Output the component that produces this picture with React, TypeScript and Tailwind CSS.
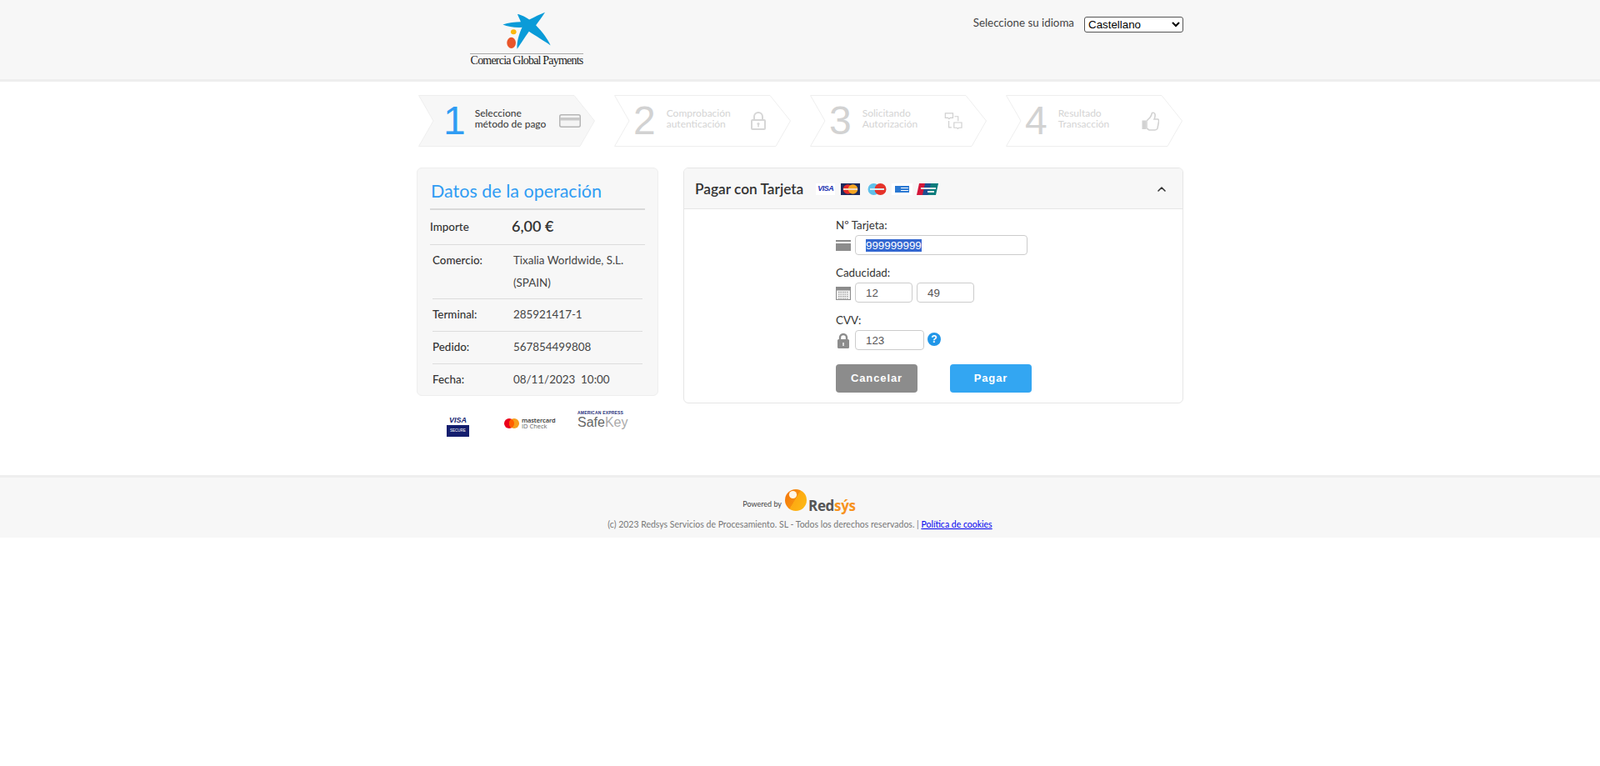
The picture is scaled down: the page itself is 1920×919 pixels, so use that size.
import { useEffect, useRef } from 'react'
import { ChevronUp } from 'lucide-react'

function CaixaLogo() {
  return (
    <div className="ml-[64px] w-[136px] pt-[13px]">
      <svg viewBox="120 10 190 145" className="ml-[36px] block h-[48px] w-[63px]">
        <path
          d="M130 60C150 52 175 50 195 50C192 40 186 30 183 22C198 24 215 34 226 42C245 32 265 22 283 15C272 32 260 48 250 62C272 85 292 110 303 135C280 120 248 100 225 85C210 105 195 130 182 148C180 120 190 92 200 70C175 72 150 68 130 60Z"
          fill="#0a9bd8"
        />
        <ellipse cx="169" cy="86" rx="10" ry="9" fill="#fbb80f" />
        <ellipse cx="161" cy="126" rx="16" ry="20" fill="#e9552a" />
      </svg>
      <div className="mt-[3px] h-[14px] border-t border-[#aaa] pt-[1px] text-center font-['Liberation_Serif',serif] text-[14px] leading-[14px] tracking-[-0.8px] whitespace-nowrap text-[#222]">
        Comercia Global Payments
      </div>
    </div>
  )
}

function CardOutlineIcon() {
  return (
    <svg viewBox="0 0 26 16" className="h-[16px] w-[26px]">
      <rect x="0.75" y="0.75" width="24.5" height="14.5" rx="2" fill="#f4f4f4" stroke="#b5b5b5" strokeWidth="1.5" />
      <rect x="1" y="4" width="24" height="3.5" fill="#c8c8c8" />
    </svg>
  )
}

function LockOutlineIcon() {
  return (
    <svg viewBox="0 0 18 22" className="h-[22px] w-[18px]">
      <path d="M4 10V6a5 5 0 0 1 10 0v4" fill="none" stroke="#d6d6d6" strokeWidth="2" />
      <rect x="1" y="10" width="16" height="11" rx="1" fill="none" stroke="#d6d6d6" strokeWidth="2" />
      <circle cx="9" cy="14.5" r="1.6" fill="#d6d6d6" />
      <rect x="8.2" y="15" width="1.6" height="3.5" fill="#d6d6d6" />
    </svg>
  )
}

function AuthIcon() {
  return (
    <svg viewBox="520 408 67 66" className="h-[22px] w-[22px]" fill="none" stroke="#cfcfcf" strokeWidth="3.5">
      <path d="M524 413h28v17h-10l-4 4-4-4h-10z" />
      <path d="M556 447h28v19h-10l-4 4-4-4h-10z" />
      <path d="M558 425h13v17" />
      <path d="M537 441v24h10" />
    </svg>
  )
}

function ThumbIcon() {
  return (
    <svg viewBox="0 0 21 23" className="h-[23px] w-[21px]">
      <rect x="0.5" y="10.5" width="4.5" height="10.5" fill="#d2d2d2" />
      <path
        d="M6 11L10 7Q12 4 12.5 1.5Q15 0.5 16 3Q16.5 6 15 9L19.5 9Q21 10 20.5 12L19 20Q18 22 16 22L9 22L6 20Z"
        fill="#ffffff"
        stroke="#d2d2d2"
        strokeWidth="1.6"
      />
    </svg>
  )
}

const steps = [
  { n: '1', a: 'Seleccione', b: 'método de pago', active: true, pad: 'pl-[30px]', gap: 'ml-[11px]', right: 'mr-[17px]', icon: <CardOutlineIcon /> },
  { n: '2', a: 'Comprobación', b: 'autenticación', active: false, pad: 'pl-[23px]', gap: 'ml-[13px]', right: 'mr-[30px]', icon: <LockOutlineIcon /> },
  { n: '3', a: 'Solicitando', b: 'Autorización', active: false, pad: 'pl-[23px]', gap: 'ml-[13px]', right: 'mr-[29px]', icon: <AuthIcon /> },
  { n: '4', a: 'Resultado', b: 'Transacción', active: false, pad: 'pl-[23px]', gap: 'ml-[13px]', right: 'mr-[28px]', icon: <ThumbIcon /> },
]

function Step({ step }: { step: (typeof steps)[number] }) {
  return (
    <div className={`relative flex h-[62px] w-[212px] items-center ${step.pad}`}>
      <svg viewBox="0 0 212 62" className="absolute inset-0 h-[62px] w-[212px]">
        <polygon
          points="0.5,0.5 187,0.5 211.5,31 194,61.5 0.5,61.5 18,31"
          fill={step.active ? '#f7f7f7' : '#ffffff'}
          stroke="#eeeeee"
        />
      </svg>
      <span
        className={`relative font-['Liberation_Sans',sans-serif] text-[48px] leading-[62px] ${
          step.active ? 'text-[#2f9cf3]' : 'text-[#d2d2d2]'
        }`}
      >
        {step.n}
      </span>
      <div
        className={`relative mb-[6px] flex-1 text-[12px] leading-[13px] ${step.gap} ${
          step.active ? 'text-[#333]' : 'text-[#d4d4d4]'
        }`}
      >
        <div>{step.a}</div>
        <div>{step.b}</div>
      </div>
      <div className={`relative flex justify-end ${step.right}`}>{step.icon}</div>
    </div>
  )
}

function InfoRow({ label, tight, children }: { label: string; tight?: boolean; children: React.ReactNode }) {
  return (
    <div className={`mx-[3px] flex border-b border-[#dcdcdc] pt-[5px] last:border-b-0 ${tight ? 'pb-[5px]' : 'pb-[6px]'}`}>
      <div className="w-[97px] shrink-0 text-[13.4px] leading-[27px] font-medium text-[#333]">{label}</div>
      <div className="text-[13.4px] leading-[27px] text-[#444]">{children}</div>
    </div>
  )
}

function OperationPanel() {
  return (
    <div className="h-[274px] w-[290px] rounded-[6px] border border-[#eee] bg-[#f7f7f7] px-[15px]">
      <h2 className="h-[50px] border-b-2 border-[#d9d9d9] pt-[12px] pl-[1px] text-[21.5px] leading-[30px] text-[#2f9cf3]">
        Datos de la operación
      </h2>
      <div className="flex h-[42px] items-center border-b border-[#dcdcdc] pb-[2px]">
        <div className="mt-[2px] w-[98px] text-[13.4px] font-medium text-[#333]">Importe</div>
        <div className="text-[18px] font-semibold text-[#333]">6,00 €</div>
      </div>
      <InfoRow label="Comercio:" tight>
        Tixalia Worldwide, S.L.
        <br />
        (SPAIN)
      </InfoRow>
      <InfoRow label="Terminal:">285921417-1</InfoRow>
      <InfoRow label="Pedido:">567854499808</InfoRow>
      <InfoRow label="Fecha:">08/11/2023&nbsp;&nbsp;10:00</InfoRow>
    </div>
  )
}

function SecureLogos() {
  return (
    <div className="mt-[20px] flex items-start">
      <div className="mt-[4px] ml-[36px] flex w-[27px] flex-col items-center">
        <span className="font-['Liberation_Sans',sans-serif] text-[9px] leading-[10px] font-bold text-[#141e6e] italic">VISA</span>
        <span className="mt-[1px] flex h-[14px] w-[27px] items-center justify-center bg-[#141e6e] font-['Liberation_Sans',sans-serif] text-[4.5px] text-white">
          SECURE
        </span>
      </div>
      <div className="mt-[6px] ml-[42px] flex w-[62px] items-center">
        <svg viewBox="0 0 18 12" className="h-[12px] w-[18px] shrink-0">
          <circle cx="6" cy="6" r="6" fill="#eb001b" />
          <circle cx="12" cy="6" r="6" fill="#f79e1b" />
          <path d="M9 0.8a6 6 0 0 1 0 10.4a6 6 0 0 1 0-10.4z" fill="#ff5f00" />
        </svg>
        <div className="ml-[3px] font-['Open_Sans',sans-serif] text-[7.5px] leading-[7px] whitespace-nowrap text-[#333]">
          <div className="font-semibold tracking-[-0.1px]">mastercard</div>
          <div className="text-[#666]">ID Check</div>
        </div>
      </div>
      <div className="-mt-[3px] ml-[26px] w-[62px] font-['Liberation_Sans',sans-serif]">
        <div className="text-[5px] leading-[6px] font-bold tracking-[0.2px] whitespace-nowrap text-[#1f2f7a]">
          AMERICAN EXPRESS
        </div>
        <div className="text-[16px] leading-[18px] whitespace-nowrap">
          <span className="text-[#666]">Safe</span>
          <span className="text-[#aaa]">Key</span>
        </div>
      </div>
    </div>
  )
}

function BrandIcons() {
  return (
    <div className="ml-[15px] flex items-center">
      <span className="flex h-[14px] w-[23px] items-center justify-center bg-white font-['Liberation_Sans',sans-serif] text-[9px] font-bold tracking-[-0.5px] text-[#1a2fb0] italic">
        VISA
      </span>
      <svg viewBox="0 0 23 14" className="ml-[7px] h-[14px] w-[23px]">
        <rect width="23" height="14" fill="#1c2a5e" />
        <circle cx="8.5" cy="7" r="5.8" fill="#e32b2b" />
        <circle cx="14.5" cy="7" r="5.8" fill="#f5a623" />
        <rect x="3" y="6" width="17" height="2" fill="#f4d9c0" />
      </svg>
      <svg viewBox="0 0 23 14" className="ml-[9px] h-[14px] w-[23px]">
        <circle cx="7.5" cy="7" r="7" fill="#5fc0ea" />
        <circle cx="15.5" cy="7" r="7" fill="#e5332a" />
        <rect x="3" y="6" width="17" height="2" fill="#d8eef8" />
      </svg>
      <svg viewBox="0 0 25 14" className="ml-[6px] h-[14px] w-[25px]">
        <rect width="25" height="14" fill="#ffffff" />
        <rect x="4" y="3" width="17" height="8" fill="#2a78d2" />
        <rect x="11" y="5" width="9" height="1" fill="#ffffff" />
        <rect x="11" y="8" width="9" height="1" fill="#ffffff" />
      </svg>
      <svg viewBox="0 0 26 14" className="ml-[5px] h-[14px] w-[26px]">
        <polygon points="3,0 11,0 8,14 0,14" fill="#d4173a" />
        <polygon points="10,0 18,0 15,14 7,14" fill="#1d4f91" />
        <polygon points="17,0 26,0 23,14 14,14" fill="#0a7c7c" />
        <rect x="5" y="5" width="18" height="2" fill="#e8e8e8" />
        <rect x="13" y="9" width="8" height="2" fill="#e8e8e8" />
      </svg>
    </div>
  )
}

function FormLabel({ children, className = '' }: { children: string; className?: string }) {
  return <div className={`h-[20px] text-[13.4px] leading-[20px] text-[#333] ${className}`}>{children}</div>
}

const fieldClass =
  "h-[24px] rounded-[4px] border border-[#ccc] bg-white pl-[12px] font-['Liberation_Sans',sans-serif] text-[13.33px] text-[#555] outline-none selection:bg-[#3367d1] selection:text-white"

function CardPanel() {
  const cardRef = useRef<HTMLInputElement>(null)

  useEffect(() => {
    cardRef.current?.focus()
    cardRef.current?.select()
  }, [])

  return (
    <div className="h-[283px] w-[600px] overflow-hidden rounded-[6px] border border-[#e6e6e6] bg-white">
      <div className="flex h-[49px] items-center border-b border-[#e6e6e6] bg-[#f7f7f7] pt-[2px] pr-[17px] pl-[13px]">
        <h3 className="text-[17.3px] font-semibold text-[#333]">Pagar con Tarjeta</h3>
        <BrandIcons />
        <ChevronUp size={16} strokeWidth={2.4} color="#333" className="ml-auto" />
      </div>
      <div className="pt-[9px] pl-[182px]">
        <FormLabel>Nº Tarjeta:</FormLabel>
        <div className="mt-[2px] flex items-center">
          <svg viewBox="0 0 18 13" className="mr-[5px] h-[13px] w-[18px]">
            <rect y="0" width="18" height="2" fill="#8c8c8c" />
            <rect y="4" width="18" height="9" fill="#8c8c8c" />
          </svg>
          <input ref={cardRef} className={`${fieldClass} w-[207px]`} defaultValue="999999999" />
        </div>

        <FormLabel className="mt-[11px]">Caducidad:</FormLabel>
        <div className="mt-[2px] flex items-center">
          <svg viewBox="0 0 18 17" className="mr-[5px] h-[17px] w-[18px]">
            <rect x="0.5" y="1.5" width="17" height="15" fill="#f2f2f2" stroke="#8c8c8c" />
            <rect x="0" y="1" width="18" height="4.5" fill="#8c8c8c" />
            <path d="M3 7.5h12M3 10h12M3 12.5h12M3 15h12" stroke="#8c8c8c" strokeDasharray="1.5 1" />
          </svg>
          <input className={`${fieldClass} w-[69px]`} defaultValue="12" />
          <input className={`${fieldClass} ml-[5px] w-[69px]`} defaultValue="49" />
        </div>

        <FormLabel className="mt-[11px]">CVV:</FormLabel>
        <div className="mt-[2px] flex items-center">
          <svg viewBox="0 0 18 19" className="mr-[5px] h-[19px] w-[18px]">
            <path d="M5 9V6a4 4 0 0 1 8 0v3" fill="none" stroke="#8c8c8c" strokeWidth="2.4" />
            <rect x="2" y="8" width="14" height="11" rx="1.5" fill="#8c8c8c" />
            <rect x="8" y="12" width="2" height="4" fill="#d9d9d9" />
          </svg>
          <input className={`${fieldClass} w-[83px]`} defaultValue="123" />
          <span className="mb-[2px] ml-[4px] flex h-[16px] w-[16px] items-center justify-center rounded-full bg-[#2196e8] font-['Liberation_Sans',sans-serif] text-[12px] font-bold text-white">
            ?
          </span>
        </div>

        <div className="mt-[17px] flex gap-[39px] font-['Liberation_Sans',sans-serif] text-[13px] font-bold tracking-[0.9px] text-white">
          <button className="h-[34px] w-[98px] rounded-[4px] bg-[#8c8c8c]">Cancelar</button>
          <button className="h-[34px] w-[98px] rounded-[4px] bg-[#33a6f2]">Pagar</button>
        </div>
      </div>
    </div>
  )
}

function RedsysLogo() {
  return (
    <div className="flex items-end">
      <svg viewBox="0 0 26 26" className="h-[26px] w-[26px]">
        <defs>
          <linearGradient id="redsysBall" x1="0" y1="0" x2="1" y2="0.6">
            <stop offset="0" stopColor="#f4720b" />
            <stop offset="0.55" stopColor="#f78f0e" />
            <stop offset="0.56" stopColor="#fdaa12" />
            <stop offset="1" stopColor="#fdb714" />
          </linearGradient>
        </defs>
        <circle cx="13" cy="13" r="13" fill="url(#redsysBall)" />
        <circle cx="9.5" cy="6.5" r="4.6" fill="#fff6e6" />
      </svg>
      <span className="mb-[-4px] ml-[2px] font-['Open_Sans',sans-serif] text-[17px] leading-[20px] font-bold tracking-[-0.3px] text-[#555]">
        Red<span className="text-[#f7931e]">sýs</span>
      </span>
    </div>
  )
}

export default function App() {
  return (
    <div className="font-['Lato',sans-serif]">
      <header className="h-[98px] border-b-[3px] border-[#eee] bg-[#f7f7f7]">
        <div className="mx-auto flex w-[920px] items-start justify-between">
          <CaixaLogo />
          <div className="flex pt-[18px]">
            <span className="text-[13.33px] leading-[18px] text-[#444]">Seleccione su idioma</span>
            <select
              defaultValue="Castellano"
              className="mt-[2px] ml-[12px] h-[19px] w-[119px] rounded-[3px] border border-[#555] bg-white font-['Liberation_Sans',sans-serif] text-[13.33px] text-black"
            >
              <option>Castellano</option>
            </select>
          </div>
        </div>
      </header>

      <main className="mx-auto h-[472px] w-[920px] pt-[16px]">
        <div className="ml-[2px] flex gap-[23px]">
          {steps.map((step) => (
            <Step key={step.n} step={step} />
          ))}
        </div>
        <div className="mt-[25px] flex gap-[30px]">
          <div>
            <OperationPanel />
            <SecureLogos />
          </div>
          <CardPanel />
        </div>
      </main>

      <footer className="h-[75px] border-t-[3px] border-[#eee] bg-[#f7f7f7] pt-[14px]">
        <div className="flex items-center justify-center pr-[2px]">
          <span className="mt-[10px] mr-[4px] text-[9px] text-[#444]">Powered by</span>
          <RedsysLogo />
        </div>
        <p className="mt-[9px] text-center text-[10.5px] leading-[14px] text-[#777]">
          (c) 2023 Redsys Servicios de Procesamiento. SL - Todos los derechos reservados. |{' '}
          <a href="#" className="text-[#0000ee] underline">
            Política de cookies
          </a>
        </p>
      </footer>
    </div>
  )
}
